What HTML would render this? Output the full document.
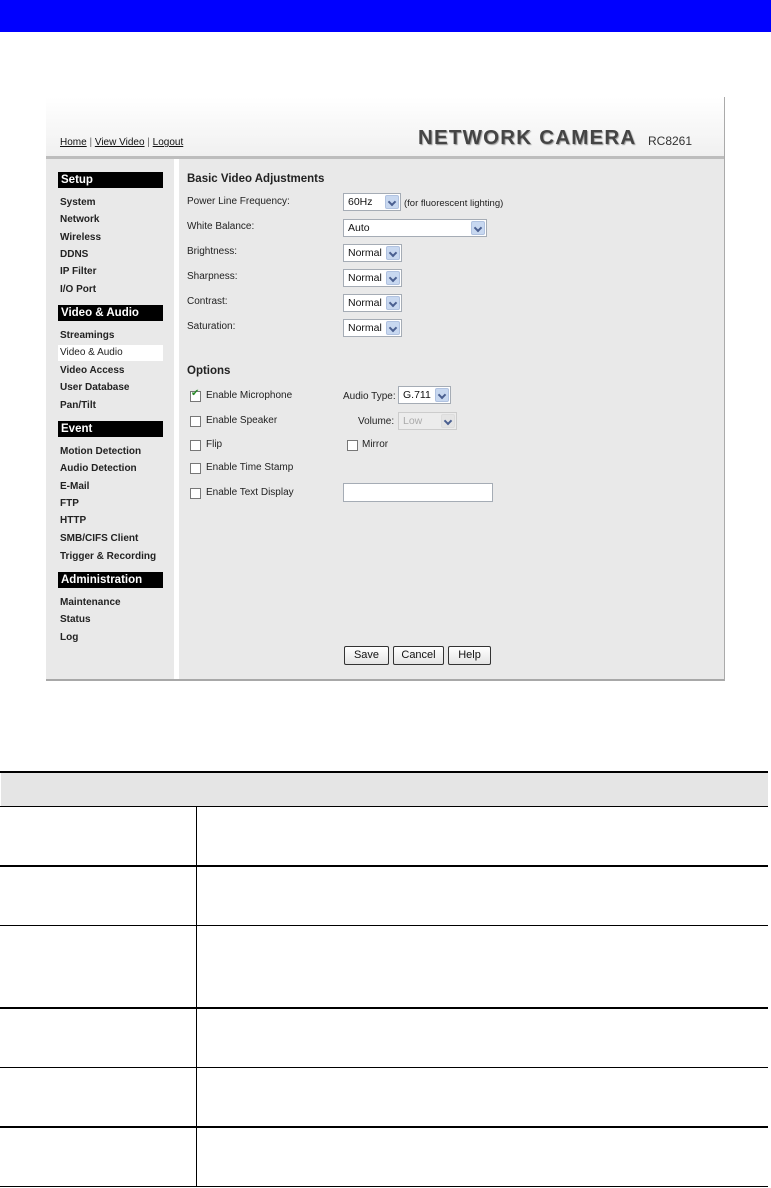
<!DOCTYPE html>
<html><head><meta charset="utf-8"><style>
*{margin:0;padding:0;box-sizing:border-box}
body{width:771px;height:1188px;background:#fff;position:relative;font-family:"Liberation Sans",Arial,sans-serif;overflow:hidden}
.a{position:absolute}
.t{position:absolute;font-size:10px;color:#222;white-space:nowrap;line-height:12px}
.nav{position:absolute;left:60px;font-size:10px;font-weight:bold;color:#222;line-height:12px}
.bar{position:absolute;left:58px;width:105px;height:16px;background:#000;color:#fff;font-weight:bold;font-size:11.5px;padding-left:3px;line-height:16px}
.sel{position:absolute;background:#fff;border:1px solid #a5acb5;height:18px;font-size:10.5px;line-height:16px;padding-left:4px;color:#111}
.sel i{position:absolute;right:1px;top:1px;width:14px;height:14px;background:#c8d8f0;border:1px solid #b0c2e0;border-radius:2px}
.sel i:after{content:"";position:absolute;left:3px;top:3px;width:4px;height:4px;border-right:2px solid #4a5f90;border-bottom:2px solid #4a5f90;transform:rotate(45deg)}
.cb{position:absolute;width:11px;height:11px;border:1px solid #777;background:#fff}
.btn{position:absolute;height:19px;border:1px solid #333;border-radius:2px;background:linear-gradient(#fff,#e4e4e4);font-size:11px;text-align:center;line-height:17px;color:#111}
.hl{position:absolute;left:0;width:768px;background:#000}
u{color:#111}
</style></head><body>
<div class="a" style="left:0;top:0;width:771px;height:32px;background:#0000ff"></div>

<div class="a" style="left:46px;top:97px;width:679px;height:584px;background:#e9e9e9;border-right:1px solid #aaa;border-bottom:2px solid #a8a8a8"></div>
<div class="a" style="left:46px;top:97px;width:678px;height:60px;background:linear-gradient(#fff,#f0f0f0)"></div>
<div class="a" style="left:46px;top:156px;width:678px;height:3px;background:#bdbdbd"></div>
<div class="a" style="left:174px;top:159px;width:5px;height:520px;background:#fff"></div>
<div class="t" style="left:60px;top:137px;color:#666"><u>Home</u> | <u>View Video</u> | <u>Logout</u></div>
<div class="t" style="left:418px;top:127px;font-size:20.5px;line-height:22px;font-weight:bold;color:#444;letter-spacing:1.2px;text-shadow:1px 1px 1px #999">NETWORK CAMERA</div>
<div class="t" style="left:648px;top:135px;font-size:12px;color:#333">RC8261</div>

<div class="bar" style="top:172px">Setup</div>
<div class="nav" style="top:197px">System</div>
<div class="nav" style="top:214px">Network</div>
<div class="nav" style="top:232px">Wireless</div>
<div class="nav" style="top:249px">DDNS</div>
<div class="nav" style="top:266px">IP Filter</div>
<div class="nav" style="top:284px">I/O Port</div>
<div class="bar" style="top:305px">Video &amp; Audio</div>
<div class="nav" style="top:330px">Streamings</div>
<div class="a" style="left:58px;top:345px;width:105px;height:16px;background:#fff"></div>
<div class="nav" style="top:347px;font-weight:normal">Video &amp; Audio</div>
<div class="nav" style="top:365px">Video Access</div>
<div class="nav" style="top:382px">User Database</div>
<div class="nav" style="top:400px">Pan/Tilt</div>
<div class="bar" style="top:421px">Event</div>
<div class="nav" style="top:446px">Motion Detection</div>
<div class="nav" style="top:463px">Audio Detection</div>
<div class="nav" style="top:481px">E-Mail</div>
<div class="nav" style="top:498px">FTP</div>
<div class="nav" style="top:515px">HTTP</div>
<div class="nav" style="top:533px">SMB/CIFS Client</div>
<div class="nav" style="top:551px">Trigger &amp; Recording</div>
<div class="bar" style="top:572px">Administration</div>
<div class="nav" style="top:597px">Maintenance</div>
<div class="nav" style="top:614px">Status</div>
<div class="nav" style="top:632px">Log</div>

<div class="t" style="left:187px;top:172px;font-size:11.5px;font-weight:bold;line-height:14px">Basic Video Adjustments</div>
<div class="t" style="left:187px;top:196px">Power Line Frequency:</div>
<div class="t" style="left:187px;top:221px">White Balance:</div>
<div class="t" style="left:187px;top:246px">Brightness:</div>
<div class="t" style="left:187px;top:271px">Sharpness:</div>
<div class="t" style="left:187px;top:296px">Contrast:</div>
<div class="t" style="left:187px;top:321px">Saturation:</div>
<div class="sel" style="left:343px;top:193px;width:58px">60Hz<i></i></div>
<div class="t" style="left:404px;top:198px;font-size:9.5px">(for fluorescent lighting)</div>
<div class="sel" style="left:343px;top:219px;width:144px">Auto<i></i></div>
<div class="sel" style="left:343px;top:244px;width:59px">Normal<i></i></div>
<div class="sel" style="left:343px;top:269px;width:59px">Normal<i></i></div>
<div class="sel" style="left:343px;top:294px;width:59px">Normal<i></i></div>
<div class="sel" style="left:343px;top:319px;width:59px">Normal<i></i></div>

<div class="t" style="left:187px;top:364px;font-size:11.5px;font-weight:bold;line-height:14px">Options</div>
<div class="cb" style="left:190px;top:391px"></div><div class="t" style="left:191px;top:388px;color:#2a8a2a;font-size:10px">✔</div>
<div class="t" style="left:206px;top:390px">Enable Microphone</div>
<div class="t" style="left:343px;top:391px">Audio Type:</div>
<div class="sel" style="left:398px;top:386px;width:53px">G.711<i></i></div>
<div class="cb" style="left:190px;top:416px"></div><div class="t" style="left:206px;top:415px">Enable Speaker</div>
<div class="t" style="left:358px;top:416px">Volume:</div>
<div class="sel" style="left:398px;top:412px;width:59px;background:#ececec;border-color:#ccc;color:#aaa">Low<i style="background:#e4e4e4;border-color:#ddd"></i></div>
<div class="cb" style="left:190px;top:440px"></div><div class="t" style="left:206px;top:439px">Flip</div>
<div class="cb" style="left:347px;top:440px"></div><div class="t" style="left:362px;top:439px">Mirror</div>
<div class="cb" style="left:190px;top:463px"></div><div class="t" style="left:206px;top:462px">Enable Time Stamp</div>
<div class="cb" style="left:190px;top:488px"></div><div class="t" style="left:206px;top:487px">Enable Text Display</div>
<div class="a" style="left:343px;top:483px;width:150px;height:19px;background:#fff;border:1px solid #a5acb5"></div>
<div class="btn" style="left:344px;top:646px;width:45px">Save</div>
<div class="btn" style="left:393px;top:646px;width:51px">Cancel</div>
<div class="btn" style="left:448px;top:646px;width:43px">Help</div>

<div class="a" style="left:1px;top:773px;width:767px;height:33px;background:#e5e5e5"></div>
<div class="hl" style="top:771px;height:2px"></div>
<div class="hl" style="top:806px;height:1px"></div>
<div class="hl" style="top:865px;height:2px"></div>
<div class="hl" style="top:925px;height:1px"></div>
<div class="hl" style="top:1007px;height:2px"></div>
<div class="hl" style="top:1067px;height:1px"></div>
<div class="hl" style="top:1126px;height:2px"></div>
<div class="hl" style="top:1186px;height:1px"></div>
<div class="a" style="left:196px;top:807px;width:1px;height:380px;background:#000"></div>
</body></html>
